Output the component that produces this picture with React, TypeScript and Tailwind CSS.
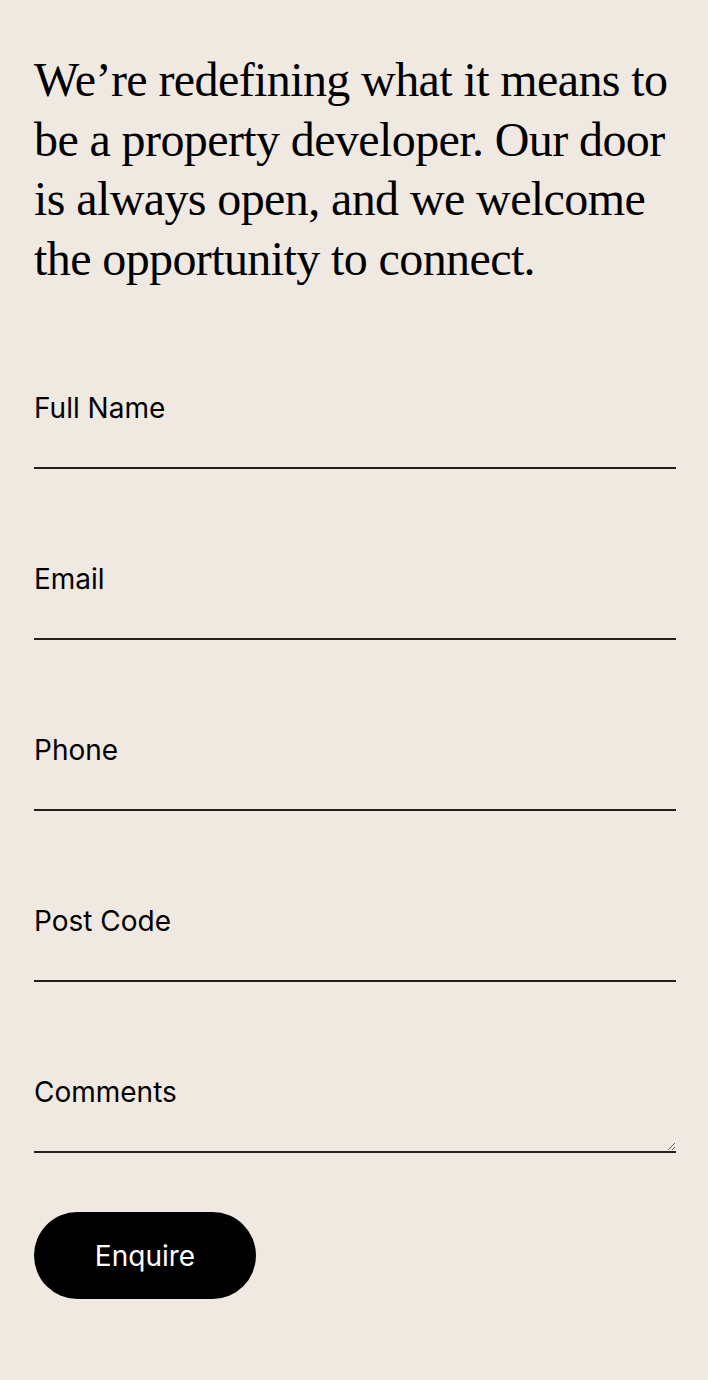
import React from 'react';

const fields = ['Full Name', 'Email', 'Phone', 'Post Code'];

const App: React.FC = () => {
  return (
    <div className="min-h-[1380px] bg-[#efe9e1] pl-[34px] pr-[32px] pt-[50px] text-black">
      {/* Intro */}
      <h1
        className="text-[48px] leading-[59.5px] tracking-[-0.6px] font-normal"
        style={{ fontFamily: '"Liberation Serif", "DejaVu Serif", serif' }}
      >
        We’re redefining what it means to be a property developer. Our door is always open, and we welcome the opportunity to connect.
      </h1>

      {/* Form */}
      <form className="mt-[103px] flex flex-col" style={{ fontFamily: 'Inter, "Liberation Sans", sans-serif' }}>
        {fields.map((label) => (
          <label key={label} className="flex flex-col mb-[93px]">
            <span className="text-[28px] leading-[34px]">{label}</span>
            <input
              type="text"
              className="h-[44px] border-b-2 border-[#231f1b] bg-transparent outline-none"
            />
          </label>
        ))}
        <label className="flex flex-col">
          <span className="text-[28px] leading-[34px]">Comments</span>
          <textarea
            rows={1}
            className="h-[44px] border-b-2 border-[#231f1b] bg-transparent outline-none resize-y"
          />
        </label>
        <button
          type="button"
          className="mt-[59px] w-[222px] h-[87px] rounded-full bg-black text-white text-[28px]"
        >
          Enquire
        </button>
      </form>
    </div>
  );
};

export default App;
